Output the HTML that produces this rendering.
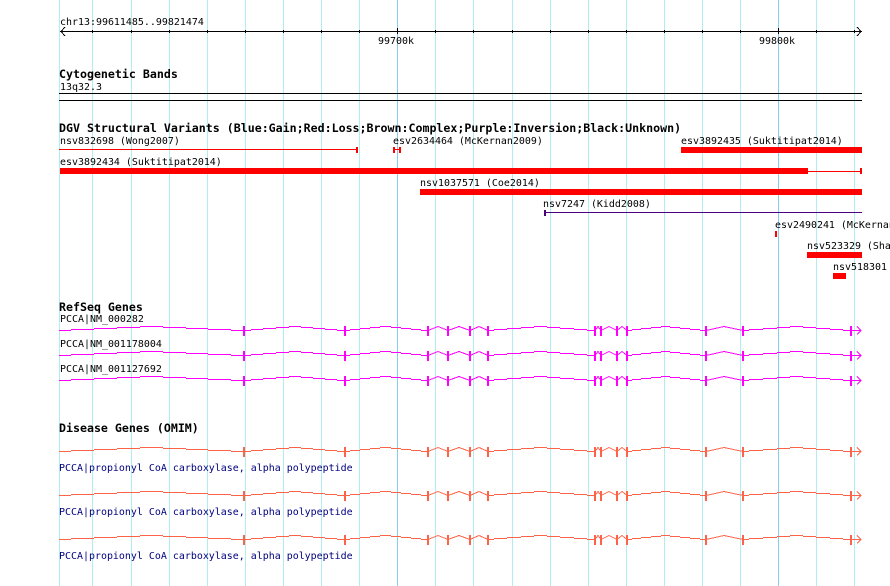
<!DOCTYPE html>
<html><head><meta charset="utf-8"><style>
html,body{margin:0;padding:0;background:#fff;width:890px;height:586px;overflow:hidden}
svg{display:block}
text{font-family:"DejaVu Sans Mono","Liberation Mono",monospace;font-size:9.96px;fill:#000;white-space:pre}
text.b{font-weight:bold;font-size:11.62px}
text.n{fill:#000080}
.g{stroke:#b0ecf0;stroke-width:1}
.d{stroke:#88ccee;stroke-width:1}
</style></head><body>
<svg width="890" height="586" viewBox="0 0 890 586" xmlns="http://www.w3.org/2000/svg">
<defs>
<g id="gene" fill="none" stroke="currentColor" stroke-width="1" shape-rendering="crispEdges">
<path d="M59 .5H71M71 -.5H94M94 -1.5H117M117 -2.5H140M140 -3.5H163M163 -2.5H186M186 -1.5H208M208 -.5H231M231 .5H251M251 -.5H263M263 -1.5H276M276 -2.5H289M289 -3.5H301M301 -2.5H313M313 -1.5H325M325 -.5H337M337 .5H350M350 -.5H360M360 -1.5H370M370 -2.5H380M380 -3.5H391M391 -2.5H401M401 -1.5H411M411 -.5H421M421 .5H428"/>
<path d="M428 .5L438 -3.5L448 .5L459 -3.5L470 .5L479 -3.5L488 .5"/>
<path d="M488 .5H494M494 -.5H507M507 -1.5H521M521 -2.5H534M534 -3.5H547M547 -2.5H560M560 -1.5H574M574 -.5H587M587 .5H595"/>
<path d="M595 .5L598 -3.5L601 .5L609 -3.5L617 .5L622 -3.5L627 .5"/>
<path d="M627 .5H632M632 -.5H641M641 -1.5H651M651 -2.5H661M661 -3.5H670M670 -2.5H680M680 -1.5H690M690 -.5H700M700 .5H706"/>
<path d="M706 .5L724 -3.5L743 .5"/>
<path d="M743 .5H749M749 -.5H763M763 -1.5H777M777 -2.5H790M790 -3.5H803M803 -2.5H816M816 -1.5H830M830 -.5H843M843 .5H861"/>
<path d="M857 -3.5L861 .5L857 4.5"/>
<g fill="currentColor" stroke="none">
<rect x="243" y="-4" width="2" height="10"/><rect x="344" y="-4" width="2" height="10"/><rect x="427" y="-4" width="2" height="10"/><rect x="447" y="-4" width="2" height="10"/><rect x="469" y="-4" width="2" height="10"/><rect x="487" y="-4" width="2" height="10"/><rect x="594" y="-4" width="2" height="10"/><rect x="600" y="-4" width="2" height="10"/><rect x="616" y="-4" width="2" height="10"/><rect x="626" y="-4" width="2" height="10"/><rect x="705" y="-4" width="2" height="10"/><rect x="742" y="-4" width="2" height="10"/><rect x="850" y="-4" width="2" height="10"/>
</g>
</g>
</defs>
<rect width="890" height="586" fill="#fff"/>
<g shape-rendering="crispEdges">
<path class="g" d="M59.5 0V586M92.5 0V586M131.5 0V586M169.5 0V586M207.5 0V586M245.5 0V586M283.5 0V586M321.5 0V586M359.5 0V586M435.5 0V586M473.5 0V586M512.5 0V586M550.5 0V586M588.5 0V586M626.5 0V586M664.5 0V586M702.5 0V586M740.5 0V586M816.5 0V586M854.5 0V586"/>
<path class="d" d="M397.5 0V586M778.5 0V586"/>
<path stroke="#000" fill="none" d="M60 31.5H862M92.5 30V33M131.5 30V33M169.5 30V33M207.5 30V33M245.5 30V33M283.5 30V33M321.5 30V33M359.5 30V33M435.5 30V33M473.5 30V33M512.5 30V33M550.5 30V33M588.5 30V33M626.5 30V33M664.5 30V33M702.5 30V33M740.5 30V33M816.5 30V33M854.5 30V33M397.5 28V34M778.5 28V34"/>
<polyline points="65,27 61,31.5 65,36" fill="none" stroke="#000"/>
<polyline points="857,27 861,31.5 857,36" fill="none" stroke="#000"/>
<path stroke="#000" d="M59 93.5H862M59 100.5H862"/>

<g fill="#f00">
<rect x="59" y="149" width="298" height="1"/><rect x="356" y="147" width="2" height="6"/>
<rect x="393" y="147" width="2" height="6"/><rect x="399" y="147" width="2" height="6"/><rect x="393" y="149" width="8" height="1"/>
<rect x="681" y="147" width="181" height="6"/>
<rect x="60" y="168" width="748" height="6"/><rect x="808" y="171" width="53" height="1"/><rect x="860" y="168" width="2" height="6"/>
<rect x="420" y="189" width="442" height="6"/>
<rect x="775" y="231" width="2" height="6"/>
<rect x="807" y="252" width="55" height="6"/>
<rect x="833" y="273" width="13" height="6"/>
</g>
<rect x="544" y="210" width="2" height="6" fill="#4b0082"/><rect x="544" y="212" width="318" height="1" fill="#4b0082"/>
</g>

<use href="#gene" x="0" y="330" color="#ff00ff"/>
<use href="#gene" x="0" y="355" color="#ff00ff"/>
<use href="#gene" x="0" y="380" color="#ff00ff"/>
<use href="#gene" x="0" y="451" color="#ff6347"/>
<use href="#gene" x="0" y="495" color="#ff6347"/>
<use href="#gene" x="0" y="539" color="#ff6347"/>

<text x="60" y="25">chr13:99611485..99821474</text>
<text x="378" y="44">99700k</text>
<text x="759" y="44">99800k</text>
<text class="b" x="59" y="78">Cytogenetic Bands</text>
<text x="60" y="90">13q32.3</text>
<text class="b" x="59" y="132">DGV Structural Variants (Blue:Gain;Red:Loss;Brown:Complex;Purple:Inversion;Black:Unknown)</text>
<text x="60" y="144">nsv832698 (Wong2007)</text>
<text x="393" y="144">esv2634464 (McKernan2009)</text>
<text x="681" y="144">esv3892435 (Suktitipat2014)</text>
<text x="60" y="165">esv3892434 (Suktitipat2014)</text>
<text x="420" y="186">nsv1037571 (Coe2014)</text>
<text x="543" y="207">nsv7247 (Kidd2008)</text>
<text x="775" y="228">esv2490241 (McKernan2009)</text>
<text x="807" y="249">nsv523329 (Shaw2004)</text>
<text x="833" y="270">nsv518301</text>
<text class="b" x="59" y="311">RefSeq Genes</text>
<text x="60" y="322">PCCA|NM_000282</text>
<text x="60" y="347">PCCA|NM_001178004</text>
<text x="60" y="372">PCCA|NM_001127692</text>
<text class="b" x="59" y="432">Disease Genes (OMIM)</text>
<text class="n" x="59" y="471">PCCA|propionyl CoA carboxylase, alpha polypeptide</text>
<text class="n" x="59" y="515">PCCA|propionyl CoA carboxylase, alpha polypeptide</text>
<text class="n" x="59" y="559">PCCA|propionyl CoA carboxylase, alpha polypeptide</text>
</svg>
</body></html>
